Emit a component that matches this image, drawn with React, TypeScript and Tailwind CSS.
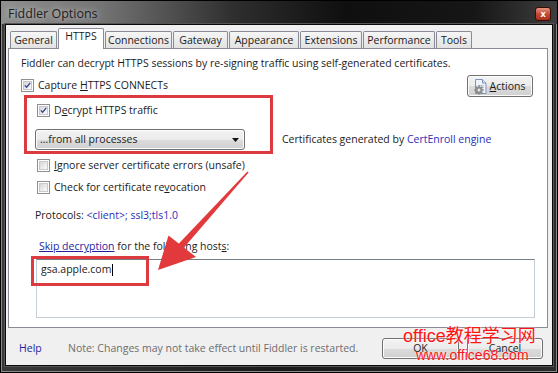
import React from "react";

function Check({ checked }: { checked?: boolean }) {
  return (
    <span className="flex h-[13px] w-[13px] shrink-0 items-center justify-center border border-[#8e8f8f] bg-white">
      <span className="flex h-[9px] w-[9px] items-center justify-center border border-[#c9c9c9] bg-[linear-gradient(135deg,#d6d6d6,#fbfbfb)]">
        {checked && (
          <svg width="9" height="9" viewBox="0 0 9 9">
            <path d="M1 4.3 L3.4 6.8 L8 1.2" fill="none" stroke="#2e4596" strokeWidth="1.7" />
          </svg>
        )}
      </span>
    </span>
  );
}

function Tab({ label, w, selected }: { label: string; w: number; selected?: boolean }) {
  if (selected) {
    return (
      <div
        className="flex h-[21px] items-start justify-center rounded-t-[2px] border border-b-0 border-[#898c95] bg-white pt-[2px]"
        style={{ width: w }}
      >
        {label}
      </div>
    );
  }
  return (
    <div
      className="mb-px flex h-[17px] items-center justify-center rounded-t-[2px] border border-b-0 border-[#898c95] bg-[linear-gradient(#f6f6f6,#e2e2e2)]"
      style={{ width: w }}
    >
      {label}
    </div>
  );
}

const face =
  "flex items-center rounded-[3px] border border-[#707070] bg-[linear-gradient(#f3f3f3_0%,#ebebeb_50%,#dcdcdc_50%,#d0d0d0_100%)] shadow-[inset_0_0_0_1px_#fcfcfc]";

function ActionsIcon() {
  return (
    <svg width="17" height="17" viewBox="0 0 17 17">
      <path d="M3.5 1.5 H10.5 L14 5 V15.5 H3.5 Z" fill="#eef3fb" stroke="#7f95b6" />
      <path d="M10.5 1.5 V5 H14" fill="#dbe4f2" stroke="#7f95b6" />
      <path d="M5.5 7.5 H12 M5.5 9.5 H12" stroke="#b8c6dc" />
      <g transform="translate(7 12)">
        <circle r="3.6" fill="#9a9a9a" />
        <path
          d="M0 -4.8 V4.8 M-4.8 0 H4.8 M-3.4 -3.4 L3.4 3.4 M3.4 -3.4 L-3.4 3.4"
          stroke="#8a8a8a"
          strokeWidth="1.6"
        />
        <circle r="1.5" fill="#e8e8e8" />
      </g>
    </svg>
  );
}

export default function App() {
  return (
    <div className="relative flex h-[373px] w-[558px] flex-col overflow-hidden border border-black bg-[linear-gradient(90deg,#3a3a3a,#1a1a1a_50%,#2c2c2c)] font-['Open_Sans',sans-serif] text-[10.5px] leading-none text-[#1b1b1b] shadow-[inset_0_0_0_1px_#8a8a8a]">
      {/* title bar */}
      <div className="flex h-[23px] shrink-0 items-center bg-[linear-gradient(90deg,#8f8f8f_0%,#747474_18%,#2e2e2e_42%,#0f0f0f_62%,#161616_85%,#3e3e3e_100%)] pl-[7px] pr-[6px]">
        <span className="pt-[3px] text-[12.5px] text-[#202020] [text-shadow:0_0_6px_rgba(255,255,255,0.75)]">
          Fiddler Options
        </span>
        <span className="ml-auto mt-[2px] flex h-[14px] w-[16px] items-center justify-center rounded-[3px] border border-[#3b0c06] bg-[linear-gradient(#e6947f,#c44a33_50%,#a8321e)] text-[9px] font-bold text-white">
          x
        </span>
      </div>

      {/* client area */}
      <div className="mx-[4px] flex h-[342px] shrink-0 flex-col border border-[#0a0a0a] bg-[#f0f0f0] shadow-[0_0_0_1px_#555]">
        {/* tabs */}
        <div className="relative z-10 ml-[4px] mt-[3px] flex h-[21px] items-end gap-px">
          <Tab label="General" w={47} />
          <Tab label="HTTPS" w={46} selected />
          <Tab label="Connections" w={67} />
          <Tab label="Gateway" w={55} />
          <Tab label="Appearance" w={70} />
          <Tab label="Extensions" w={62} />
          <Tab label="Performance" w={72} />
          <Tab label="Tools" w={36} />
        </div>

        {/* panel */}
        <div className="-mt-px ml-[2px] flex h-[280px] w-[540px] flex-col border border-[#898c95] bg-white px-[12px]">
          <div className="mt-[6px] flex h-[16px] items-center whitespace-nowrap">
            Fiddler can decrypt HTTPS sessions by re-signing traffic using self-generated certificates.
          </div>

          <div className="mt-[4px] flex h-[22px] items-start">
            <div className="mt-[4px] flex h-[13px] items-center gap-[4px]">
              <Check checked />
              <span>
                Capture <u>H</u>TTPS CONNECTs
              </span>
            </div>
            <div className={`${face} ml-auto mr-[2px] h-[22px] w-[66px] justify-center gap-px pr-[3px]`}>
              <ActionsIcon />
              <span>
                <u>A</u>ctions
              </span>
            </div>
          </div>

          <div className="ml-[16px] mt-[5px] flex h-[17px] items-center gap-[4px]">
            <Check checked />
            <span>
              D<u>e</u>crypt HTTPS traffic
            </span>
          </div>

          <div className="mt-[10px] flex h-[21px] items-center">
            <div className={`${face} ml-[14px] h-[21px] w-[210px] justify-between pl-[4px] pr-[5px]`}>
              <span>…from all processes</span>
              <svg width="7" height="4" viewBox="0 0 7 4">
                <path d="M0 0 H7 L3.5 4 Z" fill="#111" />
              </svg>
            </div>
            <span className="ml-[37px] whitespace-nowrap">
              Certificates generated by <span className="text-[#2b2fb8]">CertEnroll engine</span>
            </span>
          </div>

          <div className="ml-[16px] mt-[7px] flex h-[17px] items-center gap-[4px]">
            <Check />
            <span>
              <u>I</u>gnore server certificate errors (unsafe)
            </span>
          </div>

          <div className="ml-[16px] mt-[5px] flex h-[17px] items-center gap-[4px]">
            <Check />
            <span>
              Check for certificate re<u>v</u>ocation
            </span>
          </div>

          <div className="ml-[14px] mt-[11px] flex h-[17px] items-center">
            Protocols:&nbsp;<span className="text-[#2b2fb8]">&lt;client&gt;; ssl3;tls1.0</span>
          </div>

          <div className="ml-[18px] mt-[14px] flex h-[17px] items-center">
            <span className="text-[#1f1fa0] underline">Skip decryption</span>
            <span>
              &nbsp;for the following host<u>s</u>:
            </span>
          </div>

          <div className="ml-[15px] mt-[4px] h-[59px] w-[499px] border border-[#c3cfd8] border-t-[#767e85] bg-white px-[4px] pt-[3px]">
            <div className="flex h-[13px] items-center">
              gsa.apple.com<span className="ml-px h-[12px] w-px bg-black" />
            </div>
          </div>
        </div>

        {/* bottom bar */}
        <div className="flex flex-1 items-start pl-[13px] pr-[9px] pt-[10px]">
          <div className="flex h-[21px] w-[49px] items-center text-[#1f1fa0]">Help</div>
          <div className="flex h-[21px] items-center text-[#6d6d6d]">
            Note: Changes may not take effect until Fiddler is restarted.
          </div>
          <div className="ml-auto flex gap-[8px]">
            <div className={`${face} h-[21px] w-[77px] justify-center`}>OK</div>
            <div className={`${face} h-[21px] w-[76px] justify-center`}>Cancel</div>
          </div>
        </div>
      </div>

      {/* annotations overlay */}
      <div className="pointer-events-none absolute left-[23px] top-[94px] h-[59px] w-[249px] border-[3px] border-[#dc3a3e]" />
      <div className="pointer-events-none absolute left-[30px] top-[255px] h-[30px] w-[118px] border-[3px] border-[#dc3a3e]" />
      <svg className="pointer-events-none absolute left-[-1px] top-[-1px]" width="558" height="373" viewBox="0 0 558 373">
        <polygon points="248.6,172.6 247.4,171.4 178.2,244.2 183.2,248.6" fill="#e23a3c" />
        <polygon points="158,270 168.5,235.5 196,257" fill="#e23a3c" />
      </svg>
      <div className="pointer-events-none absolute left-[402px] top-[326px] whitespace-nowrap font-['Liberation_Sans','Noto_Sans_CJK_SC',sans-serif] text-[18px] leading-none text-[#ff1414] [text-shadow:0_0_2px_#fff]">
        office教程学习网
      </div>
      <div className="pointer-events-none absolute left-[415px] top-[347px] whitespace-nowrap font-['Liberation_Sans',sans-serif] text-[14px] leading-none text-[#ff1414] [text-shadow:0_0_2px_#fff]">
        www.office68.com
      </div>
    </div>
  );
}
